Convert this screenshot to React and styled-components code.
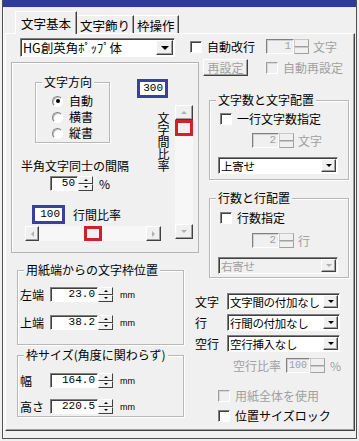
import React from "react";
import styled, { createGlobalStyle, css } from "styled-components";

const GlobalStyle = createGlobalStyle`
  html, body { margin: 0; padding: 0; background: #f0f0f0; }
  body {
    font-family: "Noto Sans CJK JP", "Noto Sans", sans-serif;
    font-size: 12px;
    line-height: 14px;
    color: #000;
  }
  * { box-sizing: border-box; }
`;

const gray = "#a0a0a0";

const Window = styled.div`
  width: 359px;
  height: 441px;
  background: #f0f0f0;
  padding: 0 2px 2px 2px;
  overflow: hidden;
`;

const Frame = styled.div`
  height: 100%;
  border: 1px solid #505050;
  border-top: none;
  box-shadow: inset 1px 0 #fff;
  display: flex;
  flex-direction: column;
`;

const TitleStrip = styled.div`
  height: 8px;
  flex: none;
  background: #2f3a9e;
  border-bottom: 1px solid #e8e8f4;
`;

const Body = styled.div`
  flex: 1;
  display: flex;
  flex-direction: column;
  padding: 3px 1px 0 2px;
`;

const TabRow = styled.div`
  display: flex;
  align-items: flex-end;
  height: 22px;
  padding-left: 10px;
  position: relative;
  z-index: 1;
`;

const Tab = styled.div`
  font-size: 12.5px;
  line-height: 16px;
  height: ${(p) => (p.$active ? 23 : 18)}px;
  margin-bottom: ${(p) => (p.$active ? -1 : 0)}px;
  padding: ${(p) => (p.$active ? "4px 5px 0" : "2px 3px 0")};
  background: #f0f0f0;
  border-top: 1px solid #fff;
  border-left: ${(p) => (p.$active ? "1px solid #fff" : "none")};
  border-right: 1px solid #404040;
  box-shadow: inset -1px 0 #a0a0a0;
`;

const Panel = styled.div`
  height: 398px;
  border: 1px solid;
  border-color: #fff #404040 #404040 #fff;
  box-shadow: inset -1px -1px #a0a0a0;
  display: flex;
  flex-direction: column;
`;

const TopRow = styled.div`
  display: flex;
  align-items: flex-start;
  margin-top: 4px;
  padding-left: 14px;
`;

const Columns = styled.div`
  display: flex;
  align-items: flex-start;
`;

const LeftCol = styled.div`
  flex: 0 0 184px;
  min-width: 0;
  margin-left: 5px;
  display: flex;
  flex-direction: column;
`;

const RightCol = styled.div`
  flex: 1;
  min-width: 0;
  display: flex;
  flex-direction: column;
`;

const BigBox = styled.div`
  width: 188px;
  height: 191px;
  flex: none;
  margin-top: 5px;
  border: 1px solid #b4b4b4;
  box-shadow: inset 1px 1px #fff;
  display: flex;
  align-items: flex-start;
`;

const Main = styled.div`
  flex: 0 0 145px;
  min-width: 0;
  display: flex;
  flex-direction: column;
  align-items: flex-start;
`;

const Side = styled.div`
  flex: 1;
  min-width: 0;
  display: flex;
  flex-direction: column;
  align-items: flex-start;
`;

const Group = styled.div`
  width: ${(p) => p.$w}px;
  height: ${(p) => p.$h}px;
  margin: ${(p) => p.$m};
  border: 1px solid #b8b8b8;
  box-shadow: inset 1px 1px #fff, 1px 1px #fff;
  display: flex;
  flex-direction: column;
  align-items: flex-start;
  flex: none;
`;

const Legend = styled.span`
  display: inline-block;
  margin: -8px 0 0 6px;
  padding: 0 2px;
  background: #f0f0f0;
  line-height: 14px;
  font-size: 12px;
`;

const Row = styled.div`
  display: flex;
  align-items: ${(p) => p.$align || "center"};
  flex: none;
  margin: ${(p) => p.$m || 0};
  gap: ${(p) => p.$gap || 0}px;
  color: ${(p) => (p.$disabled ? gray : "inherit")};
`;

const RadioList = styled.div`
  display: flex;
  flex-direction: column;
  gap: 2px;
  margin: 5px 0 0 16px;
`;

const Label = styled.span`
  display: inline-block;
  width: ${(p) => (p.$w ? `${p.$w}px` : "auto")};
  margin-left: ${(p) => p.$ml || 0}px;
  color: ${(p) => (p.$disabled ? gray : "#000")};
  white-space: nowrap;
`;

const Unit = styled.span`
  margin-left: ${(p) => p.$ml || 4}px;
  font-family: "Liberation Sans", sans-serif;
  font-size: 9px;
  color: #000;
`;

const Field = styled.div`
  width: ${(p) => p.$w}px;
  height: ${(p) => p.$h || 15}px;
  flex: none;
  margin-left: ${(p) => p.$ml || 0}px;
  background: ${(p) => (p.$disabled ? "#f0f0f0" : "#fff")};
  border: 1px solid;
  border-color: #808080 #fff #fff #808080;
  box-shadow: inset 1px 1px ${(p) => (p.$disabled ? "#d0d0d0" : "#404040")};
  display: flex;
  align-items: center;
  justify-content: flex-end;
  padding: 0 2px 0 1px;
  font-family: "Liberation Mono", "DejaVu Sans Mono", monospace;
  font-size: ${(p) => p.$fs || 11}px;
  line-height: 1;
  color: ${(p) => (p.$disabled ? gray : "#000")};
`;

const Mark = styled.div`
  width: ${(p) => p.$w}px;
  height: ${(p) => p.$h}px;
  flex: none;
  border: 3px solid ${(p) => p.$color};
  background: ${(p) => (p.$fill ? p.$fill : "#fff")};
  margin: ${(p) => p.$m || 0};
  display: flex;
  align-items: center;
  justify-content: flex-end;
  padding-right: 2px;
  font-family: "Liberation Mono", monospace;
  font-size: 11px;
  line-height: 1;
`;

const SpinCol = styled.div`
  width: 15px;
  height: 15px;
  flex: none;
  display: flex;
  flex-direction: column;
`;

const SpinBtn = styled.div`
  flex: 1;
  background: #f0f0f0;
  border: 1px solid;
  border-color: ${(p) =>
    p.$disabled ? "#c8c8c8 #a0a0a0 #a0a0a0 #c8c8c8" : "#fff #404040 #404040 #fff"};
  display: flex;
  align-items: center;
  justify-content: center;
`;

const caretDirs = {
  up: css`
    border-left: ${(p) => p.$s}px solid transparent;
    border-right: ${(p) => p.$s}px solid transparent;
    border-bottom: ${(p) => p.$s}px solid ${(p) => p.$c};
  `,
  down: css`
    border-left: ${(p) => p.$s}px solid transparent;
    border-right: ${(p) => p.$s}px solid transparent;
    border-top: ${(p) => p.$s}px solid ${(p) => p.$c};
  `,
  left: css`
    border-top: ${(p) => p.$s}px solid transparent;
    border-bottom: ${(p) => p.$s}px solid transparent;
    border-right: ${(p) => p.$s}px solid ${(p) => p.$c};
  `,
  right: css`
    border-top: ${(p) => p.$s}px solid transparent;
    border-bottom: ${(p) => p.$s}px solid transparent;
    border-left: ${(p) => p.$s}px solid ${(p) => p.$c};
  `,
};

const Caret = styled.span`
  width: 0;
  height: 0;
  ${(p) => caretDirs[p.$dir]}
`;

const Spin = ({ disabled }) => (
  <SpinCol>
    <SpinBtn $disabled={disabled}>
      {!disabled && <Caret $dir="up" $s={2} $c="#000" />}
    </SpinBtn>
    <SpinBtn $disabled={disabled}>
      {!disabled && <Caret $dir="down" $s={2} $c="#000" />}
    </SpinBtn>
  </SpinCol>
);

const ComboBox = styled.div`
  width: ${(p) => p.$w}px;
  height: ${(p) => p.$h || 17}px;
  flex: none;
  margin: ${(p) => p.$m || 0};
  background: ${(p) => (p.$disabled ? "#f0f0f0" : "#fff")};
  border: 1px solid;
  border-color: #808080 #fff #fff #808080;
  box-shadow: inset 1px 1px #404040;
  display: flex;
  align-items: stretch;
  padding: 1px 1px 1px 2px;
`;

const ComboText = styled.span`
  flex: 1;
  min-width: 0;
  display: flex;
  align-items: center;
  font-size: ${(p) => (p.$big ? 12.5 : 11.5)}px;
  letter-spacing: ${(p) => (p.$big ? 0 : -0.3)}px;
  color: ${(p) => (p.$disabled ? gray : "#000")};
  white-space: nowrap;
`;

const DropBtn = styled.div`
  width: ${(p) => (p.$big ? 17 : 15)}px;
  flex: none;
  background: #f0f0f0;
  border: 1px solid;
  border-color: #fff #404040 #404040 #fff;
  box-shadow: inset -1px -1px #a0a0a0;
  display: flex;
  align-items: center;
  justify-content: center;
`;

const Combo = ({ w, h, m, big, disabled, children }) => (
  <ComboBox $w={w} $h={h} $m={m} $disabled={disabled}>
    <ComboText $big={big} $disabled={disabled}>
      {children}
    </ComboText>
    <DropBtn $big={big}>
      <Caret $dir="down" $s={big ? 4 : 3} $c={disabled ? "#b0b0b0" : "#000"} />
    </DropBtn>
  </ComboBox>
);

const CheckBox = styled.span`
  width: 12px;
  height: 12px;
  flex: none;
  background: ${(p) => (p.$disabled ? "#f0f0f0" : "#fff")};
  border: 1px solid;
  border-color: ${(p) => (p.$disabled ? "#a0a0a0" : "#808080")} #fff #fff
    ${(p) => (p.$disabled ? "#a0a0a0" : "#808080")};
  box-shadow: inset 1px 1px ${(p) => (p.$disabled ? "#d8d8d8" : "#404040")};
`;

const Check = ({ children, disabled, m }) => (
  <Row $m={m} $gap={5}>
    <CheckBox $disabled={disabled} />
    <Label $disabled={disabled}>{children}</Label>
  </Row>
);

const RadioDot = styled.span`
  width: 11px;
  height: 11px;
  flex: none;
  border-radius: 50%;
  background: #fff;
  border: 1px solid;
  border-color: #808080 #fff #fff #808080;
  box-shadow: inset 1px 1px #c0c0c0;
  display: flex;
  align-items: center;
  justify-content: center;
  &::after {
    content: "";
    width: 4px;
    height: 4px;
    border-radius: 50%;
    background: ${(p) => (p.$on ? "#000" : "transparent")};
  }
`;

const Radio = ({ on, children }) => (
  <Row $gap={6}>
    <RadioDot $on={on} />
    <Label>{children}</Label>
  </Row>
);

const Button = styled.div`
  width: 45px;
  height: 17px;
  flex: none;
  background: #f0f0f0;
  border: 1px solid;
  border-color: #fff #404040 #404040 #fff;
  box-shadow: inset -1px -1px #a0a0a0;
  display: flex;
  align-items: center;
  justify-content: center;
  color: ${gray};
`;

const VTrack = styled.div`
  width: 18px;
  height: 134px;
  margin-left: 6px;
  background: #f7f7f7;
  display: flex;
  flex-direction: column;
`;

const HTrack = styled.div`
  width: 136px;
  height: 15px;
  margin: 2px 0 0 13px;
  background: #f7f7f7;
  display: flex;
  align-items: stretch;
`;

const ScrollBtn = styled.div`
  width: ${(p) => p.$w}px;
  height: ${(p) => p.$h}px;
  flex: none;
  background: #f0f0f0;
  border: 1px solid;
  border-color: #fff #404040 #404040 #fff;
  box-shadow: inset -1px -1px #a0a0a0;
  display: flex;
  align-items: center;
  justify-content: center;
`;

const Fill = styled.div`
  flex: 1;
`;

const VerticalText = styled.div`
  writing-mode: vertical-rl;
  font-size: 12px;
  line-height: 12px;
  width: 12px;
  margin-top: 7px;
`;

const Caption = styled.div`
  margin: ${(p) => p.$m};
  white-space: nowrap;
`;

export default function App() {
  return (
    <>
      <GlobalStyle />
      <Window>
        <Frame>
          <TitleStrip />
          <Body>
            <TabRow>
              <Tab $active>文字基本</Tab>
              <Tab>文字飾り</Tab>
              <Tab>枠操作</Tab>
            </TabRow>
            <Panel>
              <TopRow>
                <Combo w={155} h={19} big>
                  HG創英角ﾎﾟｯﾌﾟ体
                </Combo>
                <Check m="2px 0 0 15px">自動改行</Check>
                <Row $m="1px 0 0 11px" $disabled>
                  <Field $w={28} $disabled>
                    1
                  </Field>
                  <Spin disabled />
                  <Label $ml={4} $disabled>
                    文字
                  </Label>
                </Row>
              </TopRow>

              <Columns>
                <LeftCol>
                  <BigBox>
                    <Main>
                      <Group $w={75} $h={61} $m="19px 0 0 23px">
                        <Legend>文字方向</Legend>
                        <RadioList>
                          <Radio on>自動</Radio>
                          <Radio>横書</Radio>
                          <Radio>縦書</Radio>
                        </RadioList>
                      </Group>
                      <Caption $m="16px 0 0 9px">半角文字同士の間隔</Caption>
                      <Row $m="3px 0 0 38px">
                        <Field $w={28}>50</Field>
                        <Spin />
                        <Label $ml={6}>%</Label>
                      </Row>
                      <Row $m="14px 0 0 20px">
                        <Mark $w={33} $h={19} $color="#3a3fa4">
                          100
                        </Mark>
                        <Label $ml={8}>行間比率</Label>
                      </Row>
                      <HTrack>
                        <ScrollBtn $w={14} $h={15}>
                          <Caret $dir="left" $s={3} $c="#b0b0b0" />
                        </ScrollBtn>
                        <Mark $w={18} $h={15} $color="#d0202c" $fill="#f0f0f0" $m="0 0 0 45px" />
                        <Fill />
                        <ScrollBtn $w={15} $h={15}>
                          <Caret $dir="right" $s={3} $c="#b0b0b0" />
                        </ScrollBtn>
                      </HTrack>
                    </Main>
                    <Side>
                      <Mark $w={31} $h={19} $color="#3a3fa4" $m="16px 0 0 -20px">
                        300
                      </Mark>
                      <Row $m="7px 0 0 0" $align="flex-start">
                        <VerticalText>文字間比率</VerticalText>
                        <VTrack>
                          <ScrollBtn $w={18} $h={15}>
                            <Caret $dir="up" $s={3} $c="#b0b0b0" />
                          </ScrollBtn>
                          <Mark $w={18} $h={16} $color="#d0202c" $fill="#f0f0f0" />
                          <Fill />
                          <ScrollBtn $w={18} $h={15}>
                            <Caret $dir="down" $s={3} $c="#b0b0b0" />
                          </ScrollBtn>
                        </VTrack>
                      </Row>
                    </Side>
                  </BigBox>

                  <Group $w={167} $h={75} $m="17px 0 0 6px">
                    <Legend>用紙端からの文字枠位置</Legend>
                    <Row $m="10px 0 0 2px">
                      <Label $w={30}>左端</Label>
                      <Field $w={48}>23.0</Field>
                      <Spin />
                      <Unit $ml={7}>mm</Unit>
                    </Row>
                    <Row $m="13px 0 0 2px">
                      <Label $w={30}>上端</Label>
                      <Field $w={48}>38.2</Field>
                      <Spin />
                      <Unit $ml={7}>mm</Unit>
                    </Row>
                  </Group>

                  <Group $w={167} $h={62} $m="10px 0 0 6px">
                    <Legend>枠サイズ(角度に関わらず)</Legend>
                    <Row $m="11px 0 0 2px">
                      <Label $w={30}>幅</Label>
                      <Field $w={48}>164.0</Field>
                      <Spin />
                      <Unit $ml={7}>mm</Unit>
                    </Row>
                    <Row $m="11px 0 0 2px">
                      <Label $w={30}>高さ</Label>
                      <Field $w={48}>220.5</Field>
                      <Spin />
                      <Unit $ml={7}>mm</Unit>
                    </Row>
                  </Group>
                </LeftCol>

                <RightCol>
                  <Row $m="2px 0 0 8px">
                    <Button>再設定</Button>
                    <Check m="0 0 0 18px" disabled>
                      自動再設定
                    </Check>
                  </Row>

                  <Group $w={140} $h={80} $m="24px 0 0 14px">
                    <Legend>文字数と文字配置</Legend>
                    <Check m="5px 0 0 10px">一行文字数指定</Check>
                    <Row $m="7px 0 0 42px">
                      <Field $w={27} $disabled>
                        2
                      </Field>
                      <Spin disabled />
                      <Label $ml={4} $disabled>
                        文字
                      </Label>
                    </Row>
                    <Combo w={120} m="9px 0 0 8px">
                      上寄せ
                    </Combo>
                  </Group>

                  <Group $w={140} $h={80} $m="18px 0 0 14px">
                    <Legend>行数と行配置</Legend>
                    <Check m="6px 0 0 10px">行数指定</Check>
                    <Row $m="8px 0 0 42px">
                      <Field $w={27} $disabled>
                        2
                      </Field>
                      <Spin disabled />
                      <Label $ml={4} $disabled>
                        行
                      </Label>
                    </Row>
                    <Combo w={120} m="9px 0 0 8px" disabled>
                      右寄せ
                    </Combo>
                  </Group>

                  <Row $m="15px 0 0 0">
                    <Label $w={32}>文字</Label>
                    <Combo w={113}>文字間の付加なし</Combo>
                  </Row>
                  <Row $m="4px 0 0 0">
                    <Label $w={32}>行</Label>
                    <Combo w={113}>行間の付加なし</Combo>
                  </Row>
                  <Row $m="4px 0 0 0">
                    <Label $w={32}>空行</Label>
                    <Combo w={113}>空行挿入なし</Combo>
                  </Row>
                  <Row $m="6px 0 0 38px">
                    <Label $disabled>空行比率</Label>
                    <Field $w={24} $ml={5} $fs={10} $disabled>
                      100
                    </Field>
                    <Spin disabled />
                    <Label $ml={5} $disabled>
                      %
                    </Label>
                  </Row>
                  <Check m="16px 0 0 23px" disabled>
                    用紙全体を使用
                  </Check>
                  <Check m="6px 0 0 23px">位置サイズロック</Check>
                </RightCol>
              </Columns>
            </Panel>
          </Body>
        </Frame>
      </Window>
    </>
  );
}
